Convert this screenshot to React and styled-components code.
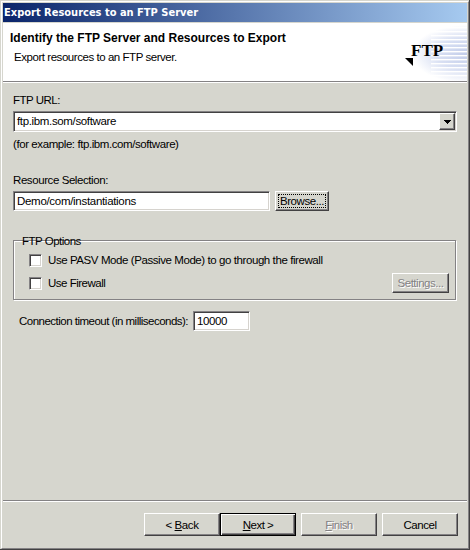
import React from 'react';
import styled, { createGlobalStyle } from 'styled-components';

const GlobalStyle = createGlobalStyle`
  * { box-sizing: border-box; }
  body { margin: 0; background: #d6d6ce; }
`;

const Window = styled.div`
  width: 470px;
  height: 550px;
  background: #d6d6ce;
  border: 0 solid #424142;
  border-width: 0 1px 1px 0;
  font-family: "Liberation Sans", Arial, sans-serif;
  font-size: 11.5px;
  line-height: 14px;
  color: #000;
  overflow: hidden;
  padding: 1px 0 0 1px;
`;

const Frame = styled.div`
  height: 548px;
  border: 1px solid;
  border-color: #fff #848284 #848284 #fff;
  padding: 1px 1px 0 1px;
  display: flex;
  flex-direction: column;
`;

const TitleBar = styled.div`
  height: 19px;
  flex: none;
  padding-left: 1px;
  background: linear-gradient(90deg, #0a246a, #a6caf0);
  color: #fff;
  font: bold 11px/20px "DejaVu Sans Condensed", Tahoma, sans-serif;
  white-space: nowrap;
`;

const Header = styled.header`
  margin-top: 1px;
  height: 59px;
  flex: none;
  display: flex;
  justify-content: space-between;
  background: #fff;
  border-bottom: 1px solid #848284;
  box-shadow: 0 1px #fff;
`;

const HeaderText = styled.div`
  padding: 8px 0 0 7px;
`;

const Heading = styled.h1`
  margin: 0;
  font-size: 12px;
  line-height: 14px;
  white-space: nowrap;
`;

const Text = styled.span`
  display: block;
  white-space: nowrap;
  letter-spacing: ${(p) => p.$track || -0.42}px;
`;

const Description = styled(Text)`
  margin: 5px 0 0 4px;
`;

const Banner = styled.svg`
  display: block;
  width: 66px;
  height: 58px;
`;

const Body = styled.main`
  flex: 1;
  padding: 11px 11px 0 10px;
`;

const Hint = styled(Text)`
  margin-top: 5px;
`;

const SectionLabel = styled(Text)`
  margin: 22px 0 4px;
`;

const Row = styled.div`
  display: flex;
  align-items: center;
  gap: 5px;
`;

const Sunken = styled.div`
  display: flex;
  width: ${(p) => p.$width}px;
  height: ${(p) => p.$height || 20}px;
  background: #fff;
  border: 1px solid;
  border-color: #848284 #fff #fff #848284;
  box-shadow: inset 1px 1px #424142, inset -1px -1px #d6d3ce;
  padding: 2px 2px 2px 3px;
`;

const Combo = styled(Sunken)`
  margin-top: 4px;
  padding: 1px;
  justify-content: space-between;
  & > span { padding: 1px 0 0 2px; }
`;

const Raised = styled.button`
  display: flex;
  align-items: center;
  justify-content: center;
  flex: none;
  width: ${(p) => p.$width}px;
  height: ${(p) => p.$height}px;
  padding: 0;
  background: #d6d6ce;
  font: inherit;
  color: inherit;
  border: 1px solid;
  border-color: #fff #424142 #424142 #fff;
  box-shadow: inset -1px -1px #848284;
  ${(p) => p.$primary && `
    border-color: #000;
    box-shadow: inset 1px 1px #fff, inset -1px -1px #424142, inset -2px -2px #848284;
  `}
  &:disabled { color: #848284; text-shadow: 1px 1px #fff; }
`;

const FocusRing = styled.span`
  display: flex;
  align-items: center;
  justify-content: center;
  width: 48px;
  height: 14px;
  border: 1px dotted #000;
`;

const Group = styled.fieldset`
  margin: 21px 0 0;
  padding: 0;
  height: 68px;
  min-width: 0;
  border: 0;
  display: grid;
  grid-template: 7px 61px / 1fr;
`;

const Legend = styled(Text)`
  grid-area: 1 / 1;
  justify-self: start;
  z-index: 1;
  margin: 2px 0 0 7px;
  padding: 0 2px;
  background: #d6d6ce;
`;

const GroupBox = styled.div`
  grid-area: 2 / 1;
  border: 1px solid #848284;
  box-shadow: 1px 1px #fff, inset 1px 1px #fff;
  width: 443px;
  height: 60px;
  padding: 10px 6px 0 15px;
  margin-top: 1px;
`;

const Option = styled.label`
  display: flex;
  align-items: center;
  gap: 6px;
`;

const CheckBox = styled.span`
  width: 13px;
  height: 13px;
  background: #fff;
  border: 1px solid;
  border-color: #848284 #fff #fff #848284;
  box-shadow: inset 1px 1px #424142, inset -1px -1px #d6d3ce;
`;

const OptionRow = styled.div`
  display: flex;
  justify-content: space-between;
  align-items: ${(p) => p.$align || 'flex-start'};
  height: ${(p) => p.$height}px;
  margin-top: ${(p) => p.$gap || 0}px;
  & > ${Option} { margin-top: ${(p) => (p.$align ? 0 : 2)}px; }
`;

const Timeout = styled(Row)`
  margin-top: 11px;
  padding-left: 6px;
`;

const Footer = styled.footer`
  height: 48px;
  flex: none;
  display: flex;
  justify-content: flex-end;
  padding: 12px 9px 0 0;
  border-top: 1px solid #848284;
  box-shadow: inset 0 1px #fff;
`;

const LastButton = styled(Raised)`
  margin-left: 5px;
`;

function FtpBanner() {
  const rows = [4, 8, 12, 16, 20, 24, 28, 32, 36, 40, 44, 48, 52];
  return (
    <Banner viewBox="0 0 66 58">
      <defs>
        <radialGradient id="glow" gradientUnits="userSpaceOnUse" cx="66" cy="31" r="29" gradientTransform="translate(66 0) scale(1.9 1) translate(-66 0)">
          <stop offset="0" stopColor="#c2cdea" />
          <stop offset="0.55" stopColor="#d9e0f3" />
          <stop offset="1" stopColor="#fff" />
        </radialGradient>
      </defs>
      <rect width="66" height="58" fill="url(#glow)" />
      {rows.map((y) => (
        <rect key={y} x="30" y={y} width="36" height="1.4" fill="#fff" />
      ))}
      <text x="10" y="33" fontFamily="Liberation Serif, serif" fontWeight="bold" fontSize="17">FTP</text>
      <path d="M4 35h8v8z" />
    </Banner>
  );
}

export default function App() {
  return (
    <>
      <GlobalStyle />
      <Window>
        <Frame>
          <TitleBar>Export Resources to an FTP Server</TitleBar>
          <Header>
            <HeaderText>
              <Heading>Identify the FTP Server and Resources to Export</Heading>
              <Description $track={-0.45}>Export resources to an FTP server.</Description>
            </HeaderText>
            <FtpBanner />
          </Header>
          <Body>
            <Text $track={-0.5}>FTP URL:</Text>
            <Combo $width={444} $height={21}>
              <Text $track={-0.35}>ftp.ibm.som/software</Text>
              <Raised $width={16} $height={17} aria-label="Open list">
                <svg width="7" height="4" shapeRendering="crispEdges"><path d="M0 0h7v1H0zM1 1h5v1H1zM2 2h3v1H2zM3 3h1v1H3z" /></svg>
              </Raised>
            </Combo>
            <Hint>(for example: ftp.ibm.com/software)</Hint>
            <SectionLabel>Resource Selection:</SectionLabel>
            <Row>
              <Sunken $width={257}><Text $track={-0.3}>Demo/com/instantiations</Text></Sunken>
              <Raised $width={54} $height={20}><FocusRing><Text>Browse...</Text></FocusRing></Raised>
            </Row>
            <Group>
              <Legend $track={-0.5}>FTP Options</Legend>
              <GroupBox>
                <OptionRow $height={17}>
                  <Option><CheckBox /><Text>Use PASV Mode (Passive Mode) to go through the firewall</Text></Option>
                </OptionRow>
                <OptionRow $height={20} $gap={5} $align="center">
                  <Option><CheckBox /><Text $track={-0.5}>Use Firewall</Text></Option>
                  <Raised $width={57} $height={20} disabled><Text $track={-0.47}>Settings...</Text></Raised>
                </OptionRow>
              </GroupBox>
            </Group>
            <Timeout>
              <Text $track={-0.51}>Connection timeout (in milliseconds):</Text>
              <Sunken $width={57}><Text>10000</Text></Sunken>
            </Timeout>
          </Body>
          <Footer>
            <Raised $width={76} $height={23}><Text>&lt; <u>B</u>ack</Text></Raised>
            <Raised $width={76} $height={23} $primary><Text $track={-0.5}><u>N</u>ext &gt;</Text></Raised>
            <LastButton $width={76} $height={23} disabled><Text $track={-0.55}><u>F</u>inish</Text></LastButton>
            <LastButton $width={76} $height={23}><Text $track={-0.47}>Cancel</Text></LastButton>
          </Footer>
        </Frame>
      </Window>
    </>
  );
}
